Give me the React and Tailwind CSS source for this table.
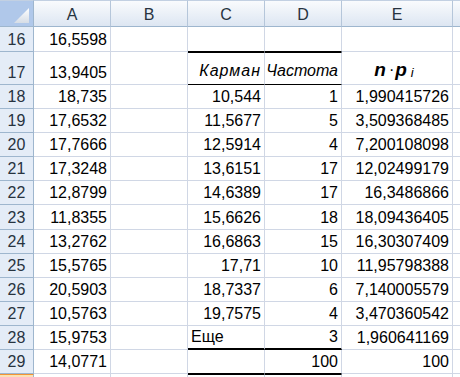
import React from "react";

const rows = [
  { n: 16, a: "16,5598", c: "", d: "", e: "" },
  { n: 17, a: "13,9405", header: true },
  { n: 18, a: "18,735", c: "10,544", d: "1", e: "1,990415726" },
  { n: 19, a: "17,6532", c: "11,5677", d: "5", e: "3,509368485" },
  { n: 20, a: "17,7666", c: "12,5914", d: "4", e: "7,200108098" },
  { n: 21, a: "17,3248", c: "13,6151", d: "17", e: "12,02499179" },
  { n: 22, a: "12,8799", c: "14,6389", d: "17", e: "16,3486866" },
  { n: 23, a: "11,8355", c: "15,6626", d: "18", e: "18,09436405" },
  { n: 24, a: "13,2762", c: "16,6863", d: "15", e: "16,30307409" },
  { n: 25, a: "15,5765", c: "17,71", d: "10", e: "11,95798388" },
  { n: 26, a: "20,5903", c: "18,7337", d: "6", e: "7,140005579" },
  { n: 27, a: "10,5763", c: "19,7575", d: "4", e: "3,470360542" },
  { n: 28, a: "15,9753", c: "Еще", cLeft: true, d: "3", e: "1,960641169" },
  { n: 29, a: "14,0771", c: "", d: "100", e: "100" },
];

const cellBase =
  "flex items-end border-r border-b border-r-[#d0d7e5] px-[3px] pb-[2px] leading-[18px] text-black whitespace-nowrap overflow-hidden";

function Cell({ children, left, extra = "" }) {
  return (
    <div className={`${cellBase} ${left ? "justify-start" : "justify-end"} ${extra}`}>
      {children}
    </div>
  );
}

function RowHead({ n }) {
  return (
    <div className="flex items-end justify-center bg-[#e4ecf7] border-r border-b border-[#9eb6ce] pb-[2px] leading-[18px] text-[#27333f]">
      {n}
    </div>
  );
}

function ColHead({ label, last }) {
  return (
    <div
      className={`flex items-center justify-center pt-[2px] bg-gradient-to-b from-[#f9fbfd] to-[#dde6f2] border-t border-t-[#c2d0e2] border-b border-b-[#9eb6ce] ${
        last ? "" : "border-r"
      } border-r-[#b5c6da] text-[#27333f]`}
    >
      {label}
    </div>
  );
}

export default function App() {
  const gridLine = "border-b-[#d0d7e5]";
  return (
    <div
      className="w-[460px] h-[377px] overflow-hidden bg-white text-[16px]"
      style={{ fontFamily: '"Liberation Sans", Arial, sans-serif' }}
    >
      <div className="grid grid-cols-[34px_77px_77px_77px_77px_111px_1fr] grid-rows-[27px_25px_33px_24px_24px_24px_24px_24px_25px_24px_24px_24px_24px_24px_24px_10px]">
        {/* header row */}
        <div className="relative bg-[#b0c8ea] border-r border-b border-[#9eb6ce] border-t border-t-[#c2d0e2]">
          <svg className="absolute left-0 top-0" width="33" height="25" viewBox="0 0 33 25">
            <defs>
              <linearGradient id="tri" x1="0" y1="0" x2="0" y2="1">
                <stop offset="0" stopColor="#ffffff" />
                <stop offset="1" stopColor="#d6dde6" />
              </linearGradient>
            </defs>
            <polygon points="29,7 29,22 14,22" fill="url(#tri)" />
          </svg>
        </div>
        <ColHead label="A" />
        <ColHead label="B" />
        <ColHead label="C" />
        <ColHead label="D" />
        <ColHead label="E" />
        <ColHead label="" last />

        {rows.map((r) => {
          const isFirst = r.n === 16;
          const isHeader = r.header;
          const is28 = r.n === 28;
          const is29 = r.n === 29;
          let cdBorder = gridLine;
          if (isFirst) cdBorder = "border-b-black";
          if (isHeader) cdBorder = "border-b-black border-t border-t-black";
          if (is28) cdBorder = "border-b-2 border-b-black";
          if (is29) cdBorder = "border-b-black";
          return (
            <React.Fragment key={r.n}>
              <RowHead n={r.n} />
              <Cell extra={gridLine}>{r.a}</Cell>
              <Cell extra={gridLine}></Cell>
              {isHeader ? (
                <>
                  <Cell extra={cdBorder + " pb-[4px]"}>
                    <span className="italic tracking-[1px]">Карман</span>
                  </Cell>
                  <Cell extra={cdBorder + " pb-[4px]"}>
                    <span className="italic">Частота</span>
                  </Cell>
                  <div className={`flex items-end justify-center border-r border-b border-r-[#d0d7e5] ${gridLine} pb-[3px] pr-[6px] leading-[22px] text-black`}>
                    <span className="italic font-bold text-[19px] mr-[3px]">n</span>
                    <span className="text-[16px] mr-[1px]">·</span>
                    <span className="italic font-bold text-[19px]">p</span>
                    <span className="italic text-[13px] ml-[4px] relative top-[3px]">i</span>
                  </div>
                </>
              ) : (
                <>
                  <Cell extra={cdBorder} left={r.cLeft}>
                    {r.c}
                  </Cell>
                  <Cell extra={cdBorder}>{r.d}</Cell>
                  <Cell extra={gridLine}>{r.e}</Cell>
                </>
              )}
              <div className={`border-b ${gridLine}`}></div>
            </React.Fragment>
          );
        })}

        {/* row 30 partial */}
        <div className="bg-[#fbe2b4] border-t border-t-[#f29536] border-r border-r-[#9eb6ce]"></div>
        <div className="border-r border-r-[#d0d7e5]"></div>
        <div className="border-r border-r-[#d0d7e5]"></div>
        <div className="border-r border-r-[#d0d7e5] border-t border-t-black"></div>
        <div className="border-r border-r-[#d0d7e5] border-t border-t-black"></div>
        <div className="border-r border-r-[#d0d7e5]"></div>
        <div></div>
      </div>
    </div>
  );
}
